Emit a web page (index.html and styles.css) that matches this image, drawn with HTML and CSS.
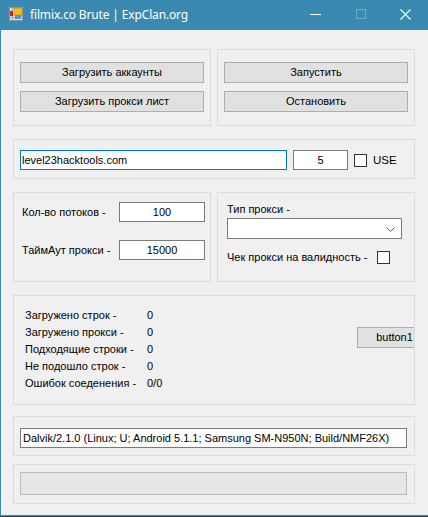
FILE: index.html
```html
<!DOCTYPE html>
<html lang="ru">
<head>
<meta charset="utf-8">
<title>filmix.co Brute | ExpClan.org</title>
<link rel="stylesheet" href="styles.css">
</head>
<body>
<div class="window">
  <div class="titlebar">
    <svg class="app-icon" width="14" height="14" viewBox="0 0 14 14">
      <rect x="0.5" y="0.5" width="13" height="13" fill="#d8dde3" stroke="#8a96a3"/>
      <line x1="3.5" y1="1" x2="3.5" y2="13" stroke="#a6b0ba"/>
      <line x1="1" y1="10.5" x2="13" y2="10.5" stroke="#a6b0ba"/>
      <rect x="1" y="4" width="3" height="5" fill="#d11f1f"/>
      <rect x="5" y="1" width="8" height="7" fill="#f3c019" stroke="#c58b0e" stroke-width="0.8"/>
      <rect x="6" y="8" width="6" height="4" fill="#5b8fe0"/>
    </svg>
    <span class="title">filmix.co Brute | ExpClan.org</span>
    <div class="controls">
      <span class="ctl ctl-min"><svg width="11" height="1" viewBox="0 0 11 1"><rect width="11" height="1" fill="#fff"/></svg></span>
      <span class="ctl ctl-max"><svg width="10" height="10" viewBox="0 0 10 10"><rect x="0.5" y="0.5" width="9" height="9" fill="none" stroke="#6aaccb"/></svg></span>
      <span class="ctl ctl-close"><svg width="11" height="11" viewBox="0 0 11 11"><path d="M0.5 0.5 L10.5 10.5 M10.5 0.5 L0.5 10.5" stroke="#fff" stroke-width="1.1"/></svg></span>
    </div>
  </div>

  <div class="client">
    <div class="pair row1">
      <div class="group g-buttons">
        <button class="btn">Загрузить аккаунты</button>
        <button class="btn">Загрузить прокси лист</button>
      </div>
      <div class="group g-buttons">
        <button class="btn">Запустить</button>
        <button class="btn">Остановить</button>
      </div>
    </div>

    <div class="group g-site">
      <div class="tb tb-site focused">level23hacktools.com</div>
      <div class="tb tb-num">5</div>
      <span class="chk"></span>
      <span class="lbl use">USE</span>
    </div>

    <div class="pair row3">
      <div class="group g-settings">
        <div class="set-row">
          <span class="lbl">Кол-во потоков -</span>
          <div class="tb tb-small">100</div>
        </div>
        <div class="set-row">
          <span class="lbl">ТаймАут прокси -</span>
          <div class="tb tb-small">15000</div>
        </div>
      </div>
      <div class="group g-proxy">
        <div class="lbl proxy-lbl">Тип прокси -</div>
        <div class="combo">
          <svg class="chev" width="9" height="5" viewBox="0 0 9 5"><path d="M0.5 0.5 L4.5 4.5 L8.5 0.5" fill="none" stroke="#606060" stroke-width="1"/></svg>
        </div>
        <div class="check-row">
          <span class="lbl">Чек прокси на валидность -</span>
          <span class="chk"></span>
        </div>
      </div>
    </div>

    <div class="group g-stats">
      <div class="stats">
        <span class="lbl">Загружено строк -</span><span class="lbl">0</span>
        <span class="lbl">Загружено прокси -</span><span class="lbl">0</span>
        <span class="lbl">Подходящие строки -</span><span class="lbl">0</span>
        <span class="lbl">Не подошло строк -</span><span class="lbl">0</span>
        <span class="lbl">Ошибок соеденения -</span><span class="lbl">0/0</span>
      </div>
      <button class="btn btn1">button1</button>
    </div>

    <div class="group g-ua">
      <div class="tb tb-ua">Dalvik/2.1.0 (Linux; U; Android 5.1.1; Samsung SM-N950N; Build/NMF26X)</div>
    </div>

    <div class="group g-progress">
      <div class="progress"></div>
    </div>
  </div>
</div>
</body>
</html>
```

FILE: styles.css
```css
* { box-sizing: border-box; }

html, body {
  margin: 0;
  padding: 0;
}

body {
  width: 428px;
  height: 517px;
  overflow: hidden;
  background: #1d4f69;
  font-family: "Liberation Sans", Arial, sans-serif;
  font-size: 11px;
  color: #000;
}

.window {
  width: 428px;
  height: 516px;
  background: #f0f0f0;
  border-left: 1px solid #3a89b0;
  border-bottom: 1px solid #3a89b0;
  overflow: hidden;
}

/* title bar */
.titlebar {
  height: 30px;
  margin-left: -1px;
  background: #3a89b0;
  display: flex;
  align-items: center;
  color: #fff;
}

.app-icon {
  margin-left: 9px;
  margin-top: -2px;
  flex: 0 0 auto;
}

.title {
  margin-left: 7px;
  font-family: "Noto Sans", "Open Sans", sans-serif;
  font-size: 12px;
  letter-spacing: -0.15px;
  color: #fff;
  margin-top: -1px;
}

.controls {
  margin-left: auto;
  display: flex;
  align-items: center;
  height: 30px;
}

.ctl {
  display: flex;
  align-items: center;
  justify-content: center;
  height: 30px;
  width: 45px;
}

.ctl-min { margin-top: -1px; }
.ctl-max { margin-top: -2px; }
.ctl-close { margin-top: -1px; }

/* client area */
.client {
  padding: 19px 13px 0 12px;
}

.group {
  border: 1px solid #dcdcdc;
  overflow: hidden;
}

.pair {
  display: flex;
  gap: 6px;
}

.pair > .group {
  width: 198px;
}

.lbl {
  white-space: nowrap;
  line-height: 14px;
}

/* buttons */
.btn {
  display: block;
  height: 21px;
  background: #e1e1e1;
  border: 1px solid #adadad;
  font-family: "Liberation Sans", Arial, sans-serif;
  font-size: 11px;
  color: #000;
  padding: 0;
  margin: 0;
  line-height: 19px;
  text-align: center;
}

.g-buttons {
  height: 77px;
  padding: 12px 6px 0 6px;
  display: flex;
  flex-direction: column;
  gap: 8px;
}

.g-buttons .btn {
  width: 184px;
}

/* text boxes */
.tb {
  height: 20px;
  background: #fff;
  border: 1px solid #7a7a7a;
  line-height: 18px;
  padding: 0 2px;
  white-space: nowrap;
  overflow: hidden;
}

.tb.focused {
  border-color: #0078d7;
  padding-left: 1px;
}

.chk {
  display: block;
  width: 13px;
  height: 13px;
  background: #fff;
  border: 1px solid #333;
  flex: 0 0 auto;
}

/* site row */
.g-site {
  margin-top: 13px;
  height: 40px;
  padding: 10px 6px 0 6px;
  display: flex;
  align-items: flex-start;
}

.tb-site { width: 267px; }

.tb-num {
  width: 55px;
  margin-left: 6px;
  text-align: center;
}

.g-site .chk {
  margin-left: 6px;
  margin-top: 4px;
}

.use {
  margin-left: 6px;
  line-height: 20px;
  font-size: 11.5px;
}

/* settings */
.row3 {
  margin-top: 13px;
}

.row3 > .group {
  height: 90px;
}

.g-settings {
  padding: 9px 5px 0 8px;
  display: flex;
  flex-direction: column;
  gap: 18px;
}

.set-row {
  display: flex;
  align-items: center;
}

.set-row .lbl {
  flex: 1;
}

.tb-small {
  width: 86px;
  text-align: center;
}

.g-proxy {
  padding: 9px 12px 0 9px;
}

.proxy-lbl {
  line-height: 14px;
  margin-top: 0;
}

.combo {
  margin-top: 2px;
  width: 175px;
  height: 21px;
  background: #fff;
  border: 1px solid #7a7a7a;
  display: flex;
  align-items: center;
  justify-content: flex-end;
  padding-right: 6px;
}

.chev {
  display: block;
  margin-top: 1px;
}

.check-row {
  margin-top: 11px;
  display: flex;
  align-items: center;
}

.check-row .chk {
  margin-left: 10px;
}

/* stats */
.g-stats {
  margin-top: 13px;
  height: 110px;
  padding: 11px 0 0 11px;
  display: flex;
  align-items: flex-start;
}

.stats {
  flex: 0 0 332px;
  display: grid;
  grid-template-columns: 122px auto;
  grid-auto-rows: 17px;
  align-items: center;
}

.stats .lbl {
  line-height: 17px;
}

.btn1 {
  flex: 0 0 75px;
  width: 75px;
  margin-top: 20px;
}

/* user agent */
.g-ua {
  margin-top: 11px;
  height: 40px;
  padding: 11px 6px 0 6px;
}

.tb-ua {
  width: 387px;
}

/* progress */
.g-progress {
  margin-top: 8px;
  height: 40px;
  padding: 7px 6px 0 6px;
}

.progress {
  width: 387px;
  height: 23px;
  background: #e6e6e6;
  border: 1px solid #bcbcbc;
}
```
